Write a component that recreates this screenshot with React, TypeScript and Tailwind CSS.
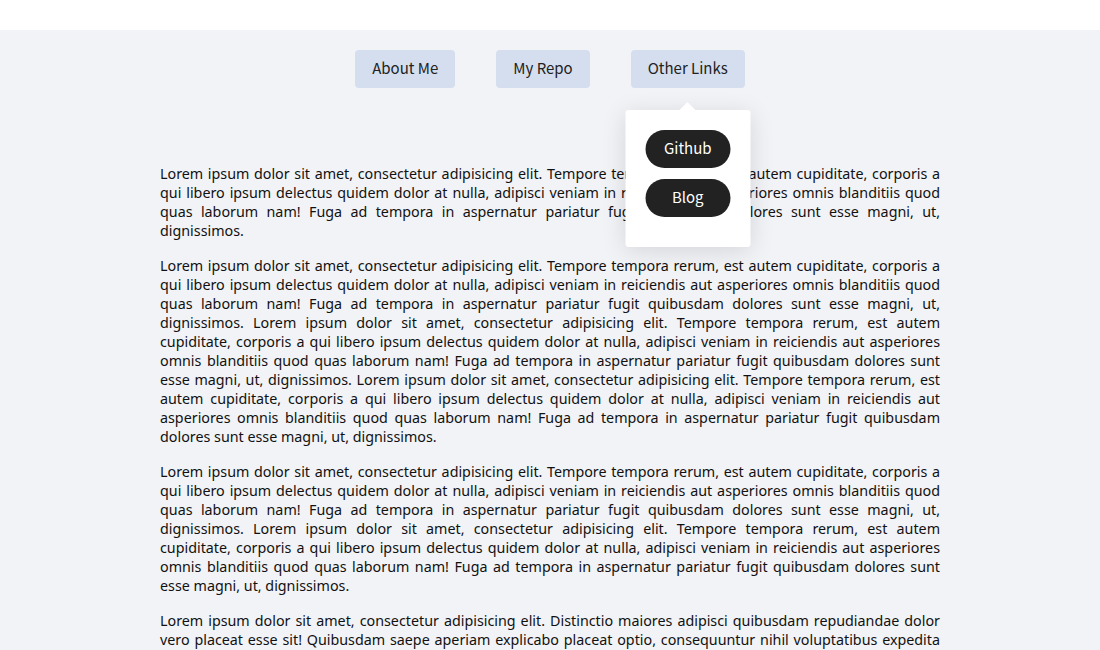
import { useState } from "react"

const lorem =
    "Lorem ipsum dolor sit amet, consectetur adipisicing elit. Tempore tempora rerum, est autem cupiditate, corporis a qui libero ipsum delectus quidem dolor at nulla, adipisci veniam in reiciendis aut asperiores omnis blanditiis quod quas laborum nam! Fuga ad tempora in aspernatur pariatur fugit quibusdam dolores sunt esse magni, ut, dignissimos."

const paragraphs = [
    lorem,
    [lorem, lorem, lorem].join(" "),
    [lorem, lorem].join(" "),
    "Lorem ipsum dolor sit amet, consectetur adipisicing elit. Distinctio maiores adipisci quibusdam repudiandae dolor vero placeat esse sit! Quibusdam saepe aperiam explicabo placeat optio, consequuntur nihil voluptatibus expedita quia vero perferendis, deleniti dolor iste. Laboriosam, eum, nam. Nostrum, dolorum, sapiente.",
]

const NavButton = ({ label, onClick }: { label: string; onClick?: () => void }) => (
    <button
        onClick={onClick}
        className="h-[38px] px-[17px] pb-[2px] rounded-[4px] bg-[#d4deee] text-[15px] text-[#222] cursor-pointer font-['Noto_Sans_CJK_KR',sans-serif]"
    >
        {label}
    </button>
)

export default function App() {
    const [open, setOpen] = useState(true)

    return (
        <div className="min-h-[650px] bg-white pt-[30px] font-['Noto_Sans',sans-serif]">
            <div className="bg-[#f2f3f7] min-h-[620px] pt-[20px]">
                <nav className="flex justify-center gap-[41px]">
                    <NavButton label="About Me" />
                    <NavButton label="My Repo" />
                    <div className="relative">
                        <NavButton label="Other Links" onClick={() => setOpen(o => !o)} />
                        {open && (
                            <div className="absolute left-1/2 -translate-x-1/2 top-[60px] z-10 w-[125px] rounded-[3px] bg-white shadow-[0_4px_24px_rgba(0,0,0,0.12)] pt-[20px] pb-[30px] flex flex-col items-center gap-[11px] font-['Noto_Sans_CJK_KR',sans-serif]">
                                <span className="absolute -top-[8px] left-1/2 -translate-x-1/2 w-0 h-0 border-x-[8px] border-x-transparent border-b-[8px] border-b-white" />
                                <a className="w-[85px] h-[38px] pb-[2px] rounded-full bg-[#222] text-white text-[15px] flex items-center justify-center">Github</a>
                                <a className="w-[85px] h-[38px] pb-[2px] rounded-full bg-[#222] text-white text-[15px] flex items-center justify-center">Blog</a>
                            </div>
                        )}
                    </div>
                </nav>

                <main className="w-[780px] mx-auto mt-[76px] flex flex-col gap-[16px] text-[14.3px] leading-[19px] text-[#111] text-justify">
                    {paragraphs.map((p, i) => (
                        <p key={i}>{p}</p>
                    ))}
                </main>
            </div>
        </div>
    )
}
